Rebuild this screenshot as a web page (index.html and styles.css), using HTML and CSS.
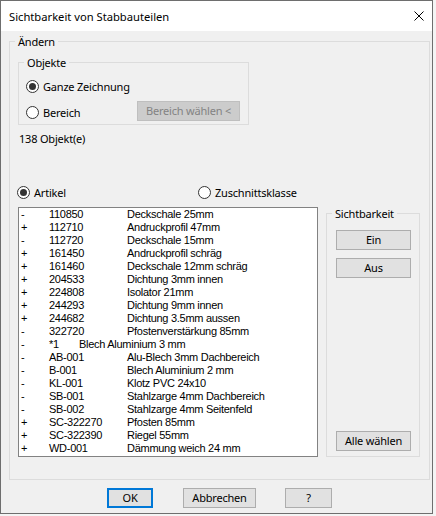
FILE: index.html
```html
<!DOCTYPE html>
<html lang="de">
<head>
<meta charset="utf-8">
<title>Sichtbarkeit von Stabbauteilen</title>
<link rel="stylesheet" href="styles.css">
</head>
<body>
<div class="window">
  <div class="titlebar">
    <span class="title">Sichtbarkeit von Stabbauteilen</span>
    <svg class="close" width="10" height="10" viewBox="0 0 10 10"><path d="M0.5 0.5 L9.5 9.5 M9.5 0.5 L0.5 9.5" stroke="#000" stroke-width="1" fill="none"/></svg>
  </div>
  <fieldset class="group group-main">
    <legend>Ändern</legend>
    <fieldset class="group group-objects">
      <legend>Objekte</legend>
      <div class="obj-row obj-row-1">
        <span class="radio checked"></span><span class="rlabel">Ganze Zeichnung</span>
      </div>
      <div class="obj-row obj-row-2">
        <span class="radio-wrap"><span class="radio"></span><span class="rlabel">Bereich</span></span>
        <button class="btn btn-disabled btn-range" disabled>Bereich wählen &lt;</button>
      </div>
    </fieldset>
    <div class="count">138 Objekt(e)</div>
    <div class="mode-row">
      <span class="mode mode-a"><span class="radio checked"></span><span class="rlabel">Artikel</span></span>
      <span class="mode mode-b"><span class="radio"></span><span class="rlabel">Zuschnittsklasse</span></span>
    </div>
    <div class="lower">
      <div class="listbox">
        <div class="row"><span class="sign">-</span><span class="code">110850</span><span>Deckschale 25mm</span></div>
        <div class="row"><span class="sign">+</span><span class="code">112710</span><span>Andruckprofil 47mm</span></div>
        <div class="row"><span class="sign">-</span><span class="code">112720</span><span>Deckschale 15mm</span></div>
        <div class="row"><span class="sign">+</span><span class="code">161450</span><span>Andruckprofil schräg</span></div>
        <div class="row"><span class="sign">+</span><span class="code">161460</span><span>Deckschale 12mm schräg</span></div>
        <div class="row"><span class="sign">+</span><span class="code">204533</span><span>Dichtung 3mm innen</span></div>
        <div class="row"><span class="sign">+</span><span class="code">224808</span><span>Isolator 21mm</span></div>
        <div class="row"><span class="sign">+</span><span class="code">244293</span><span>Dichtung 9mm innen</span></div>
        <div class="row"><span class="sign">+</span><span class="code">244682</span><span>Dichtung 3.5mm aussen</span></div>
        <div class="row"><span class="sign">-</span><span class="code">322720</span><span>Pfostenverstärkung 85mm</span></div>
        <div class="row"><span class="sign">-</span><span class="code code-short">*1</span><span>Blech Aluminium 3 mm</span></div>
        <div class="row"><span class="sign">-</span><span class="code">AB-001</span><span>Alu-Blech 3mm Dachbereich</span></div>
        <div class="row"><span class="sign">-</span><span class="code">B-001</span><span>Blech Aluminium 2 mm</span></div>
        <div class="row"><span class="sign">-</span><span class="code">KL-001</span><span>Klotz PVC 24x10</span></div>
        <div class="row"><span class="sign">-</span><span class="code">SB-001</span><span>Stahlzarge 4mm Dachbereich</span></div>
        <div class="row"><span class="sign">-</span><span class="code">SB-002</span><span>Stahlzarge 4mm Seitenfeld</span></div>
        <div class="row"><span class="sign">+</span><span class="code">SC-322270</span><span>Pfosten 85mm</span></div>
        <div class="row"><span class="sign">+</span><span class="code">SC-322390</span><span>Riegel 55mm</span></div>
        <div class="row"><span class="sign">+</span><span class="code">WD-001</span><span>Dämmung weich 24 mm</span></div>
      </div>
      <fieldset class="group group-vis">
        <legend>Sichtbarkeit</legend>
        <button class="btn btn-vis btn-ein">Ein</button>
        <button class="btn btn-vis btn-aus">Aus</button>
        <button class="btn btn-vis btn-all">Alle wählen</button>
      </fieldset>
    </div>
  </fieldset>
  <div class="footer">
    <button class="btn btn-ok">OK</button>
    <button class="btn btn-cancel">Abbrechen</button>
    <button class="btn btn-help">?</button>
  </div>
</div>
</body>
</html>
```
FILE: styles.css
```css
html, body {
  margin: 0;
  padding: 0;
}
body {
  width: 436px;
  height: 516px;
  background: #f4f4f4;
  font-family: "Noto Sans", "Open Sans", sans-serif;
  font-size: 11px;
  letter-spacing: -0.2px;
  color: #000;
  overflow: hidden;
}
.window {
  box-sizing: border-box;
  width: 433px;
  height: 514px;
  border: 1px solid #6e6e6e;
  background: #f0f0f0;
  display: flex;
  flex-direction: column;
}
.titlebar {
  height: 30px;
  background: #fff;
  display: flex;
  align-items: center;
  padding-left: 8px;
  flex: none;
}
.title {
  font-size: 11.2px;
  letter-spacing: 0;
  line-height: 15px;
}
.close {
  margin-left: auto;
  margin-right: 8px;
  display: block;
}
.group {
  margin: 0;
  padding: 0;
  border: 1px solid #dcdcdc;
  box-sizing: border-box;
  min-width: 0;
}
.group > legend {
  margin-left: 5px;
  padding: 0 3px;
  line-height: 15px;
  font-size: 11px;
}
.group-main {
  margin: 3px 0 0 8px;
  width: 421px;
  height: 446px;
  flex: none;
}
.group-objects {
  margin: 6px 0 0 8px;
  width: 231px;
  height: 70px;
}
.obj-row {
  display: flex;
  align-items: center;
  height: 20px;
}
.obj-row-1 {
  margin-top: 6px;
  padding-left: 7px;
}
.obj-row-2 {
  margin-top: 5px;
  padding-left: 7px;
  padding-right: 8px;
}
.radio-wrap, .mode {
  display: flex;
  align-items: center;
}
.radio-wrap {
  margin-top: 2px;
}
.radio {
  box-sizing: border-box;
  width: 13px;
  height: 13px;
  border: 1px solid #333;
  border-radius: 50%;
  background: #fff;
  display: inline-flex;
  align-items: center;
  justify-content: center;
  flex: none;
}
.radio.checked::after {
  content: "";
  width: 7px;
  height: 7px;
  border-radius: 50%;
  background: #333;
}
.rlabel {
  margin-left: 4px;
  line-height: 15px;
}
.btn {
  box-sizing: border-box;
  height: 20px;
  margin: 0;
  padding: 0;
  font-family: inherit;
  font-size: 11px;
  letter-spacing: -0.2px;
  line-height: 16px;
  color: #000;
  background: #e1e1e1;
  border: 1px solid #adadad;
  border-radius: 0;
  flex: none;
}
.btn-disabled {
  background: #cccccc;
  border-color: #bfbfbf;
  color: #838383;
}
.btn-range {
  margin-left: auto;
  width: 103px;
}
.count {
  margin: 6px 0 0 9px;
  line-height: 15px;
}
.mode-row {
  display: flex;
  height: 15px;
  margin-top: 39px;
  align-items: center;
}
.mode-a {
  margin-left: 7px;
  width: 181px;
}
.lower {
  display: flex;
  align-items: flex-start;
  margin-top: 6px;
}
.listbox {
  box-sizing: border-box;
  width: 300px;
  height: 250px;
  margin: 1px 0 0 8px;
  border: 1px solid #828282;
  background: #fff;
  font-family: "Liberation Sans", Arial, sans-serif;
  font-size: 11px;
  letter-spacing: -0.28px;
  padding-left: 2px;
}
.row {
  height: 13px;
  line-height: 13px;
  white-space: nowrap;
  display: flex;
}
.sign {
  width: 28px;
  flex: none;
}
.code {
  width: 78px;
  flex: none;
}
.code-short {
  width: 30px;
}
.group-vis {
  margin-left: 8px;
  width: 94px;
  height: 251px;
  display: flex;
  flex-direction: column;
  padding-bottom: 5px;
}
.btn-vis {
  width: 75px;
  margin-left: 9px;
}
.btn-ein {
  margin-top: 9px;
}
.btn-aus {
  margin-top: 8px;
}
.btn-all {
  margin-top: auto;
}
.footer {
  display: flex;
  margin-top: 8px;
  padding-left: 106px;
}
.btn-ok {
  width: 46px;
  border: 2px solid #0078d7;
}
.btn-cancel {
  width: 73px;
  margin-left: 30px;
}
.btn-help {
  width: 47px;
  margin-left: 29px;
}
```
